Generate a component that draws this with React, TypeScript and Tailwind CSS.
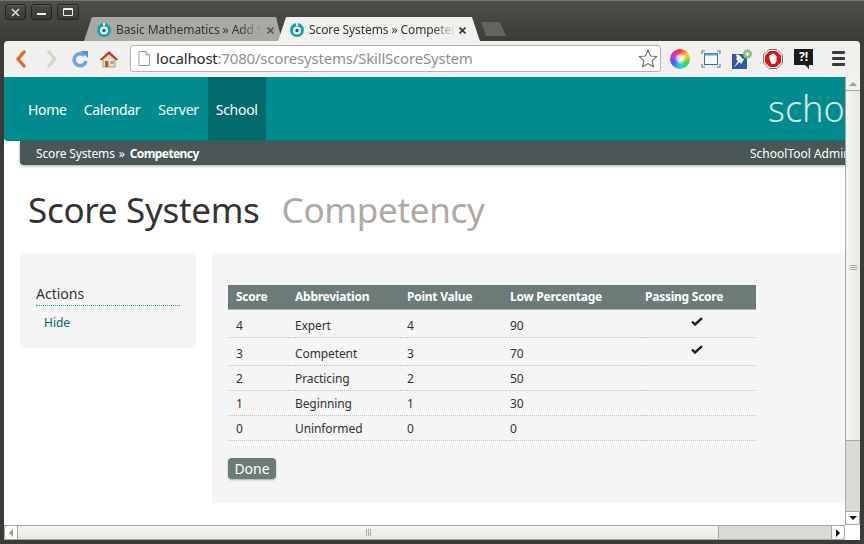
const rows = [
  { score: "4", abbr: "Expert", points: "4", low: "90", passing: true, h: "h-[28px]" },
  { score: "3", abbr: "Competent", points: "3", low: "70", passing: true, h: "h-[28px]" },
  { score: "2", abbr: "Practicing", points: "2", low: "50", passing: false, h: "h-[25px]" },
  { score: "1", abbr: "Beginning", points: "1", low: "30", passing: false, h: "h-[25px]" },
  { score: "0", abbr: "Uninformed", points: "0", low: "0", passing: false, h: "h-[25px]" },
];

function Favicon() {
  return (
    <svg width="14" height="14" viewBox="0 0 14 14" className="shrink-0">
      <circle cx="7" cy="7" r="7" fill="#12a5b0" />
      <circle cx="7" cy="7.5" r="4" fill="#e8eeee" />
      <circle cx="7" cy="7.5" r="1.7" fill="#4b5a5e" />
      <rect x="6" y="0" width="2" height="3" fill="#e8eeee" />
    </svg>
  );
}

function TabClose({ color }: { color: string }) {
  return (
    <svg width="7" height="7" viewBox="0 0 7 7" className="shrink-0">
      <path d="M.5 .5 L6.5 6.5 M6.5 .5 L.5 6.5" stroke={color} strokeWidth="1.6" />
    </svg>
  );
}

function WindowButton({ children, w }: { children: React.ReactNode; w: string }) {
  return (
    <div
      className={`${w} h-[16px] rounded-[3px] border border-[#24231f] bg-gradient-to-b from-[#4a4944] to-[#3a3935] flex items-center justify-center shadow-[inset_0_1px_0_#5c5b55]`}
    >
      {children}
    </div>
  );
}

function Toolbar() {
  return (
    <div className="h-[36px] mx-[4px] pb-[1px] bg-[#f1f0ee] rounded-t-[4px] flex items-center">
      {/* back */}
      <svg width="12" height="18" viewBox="0 0 12 18" className="ml-[11px]">
        <path d="M9 2 L3 9 L9 16" fill="none" stroke="#e2672a" strokeWidth="3.4" strokeLinejoin="round" strokeLinecap="round" />
      </svg>
      {/* forward */}
      <svg width="12" height="18" viewBox="0 0 12 18" className="ml-[19px]">
        <path d="M3 2 L9 9 L3 16" fill="none" stroke="#d6d4cf" strokeWidth="3.4" strokeLinejoin="round" strokeLinecap="round" />
      </svg>
      {/* reload */}
      <svg width="18" height="18" viewBox="0 0 18 18" className="ml-[13px]">
        <path d="M13.5 5.5 A6 6 0 1 0 15 11" fill="none" stroke="#6aa5da" strokeWidth="3.6" />
        <path d="M10 1 L17 1 L17 8 Z" fill="#4f8fcb" />
      </svg>
      {/* home */}
      <svg width="20" height="18" viewBox="0 0 20 18" className="ml-[10px]">
        <path d="M4 9 V17 H16 V9 L10 4 Z" fill="#e9dcc0" stroke="#a5875a" strokeWidth="0.8" />
        <path d="M0.8 9.5 L10 1 L19.2 9.5 L17.5 10.5 L10 4.2 L2.5 10.5 Z" fill="#c0392b" />
        <rect x="6" y="11" width="3.5" height="6" fill="#a86a32" />
        <rect x="11.5" y="11" width="3" height="3" fill="#8fa4b4" />
      </svg>
      {/* address bar */}
      <div className="ml-[11px] w-[531px] h-[27px] bg-white border border-[#b5b3ae] rounded-[3px] flex items-center pl-[7px] pr-[2px]">
        <svg width="12" height="15" viewBox="0 0 12 15" className="shrink-0">
          <path d="M1 .5 H8 L11.5 4 V14.5 H1 Z" fill="#fff" stroke="#9c9c9c" />
          <path d="M8 .5 V4 H11.5" fill="#e4e4e4" stroke="#9c9c9c" />
        </svg>
        <span className="ml-[6px] text-[15px] tracking-[-0.2px] whitespace-nowrap text-[#2c2c2c]">
          localhost<span className="text-[#8f8f8f]">:7080/scoresystems/SkillScoreSystem</span>
        </span>
        <svg width="20" height="19" viewBox="0 0 20 19" className="ml-auto">
          <path
            d="M10 1.2 L12.6 7 L18.8 7.6 L14.1 11.7 L15.5 17.8 L10 14.6 L4.5 17.8 L5.9 11.7 L1.2 7.6 L7.4 7 Z"
            fill="#fff"
            stroke="#77756f"
            strokeWidth="1.2"
            strokeLinejoin="round"
          />
        </svg>
      </div>
      {/* colour wheel */}
      <div className="ml-[9px] w-[20px] h-[20px] rounded-full bg-[conic-gradient(#f33,#fc3,#3d3,#3cd,#36e,#c3d,#f33)] flex items-center justify-center">
        <div className="w-[9px] h-[9px] rounded-full bg-white/80 blur-[1px]" />
      </div>
      {/* screen capture */}
      <svg width="20" height="18" viewBox="0 0 20 18" className="ml-[11px]">
        <path d="M1 4 V1 H4 M16 1 H19 V4 M19 14 V17 H16 M4 17 H1 V14" fill="none" stroke="#4a84b5" strokeWidth="1.2" />
        <rect x="3.5" y="3.5" width="13" height="11" fill="#f4f7fa" stroke="#3f6f99" />
        <rect x="3.5" y="3.5" width="13" height="2" fill="#6d9cc4" />
      </svg>
      {/* pin */}
      <svg width="22" height="20" viewBox="0 0 22 20" className="ml-[10px]">
        <rect x="1" y="5" width="15" height="15" fill="#3358a8" />
        <path d="M5 5.5 L8 6 L12 10 L13.5 9.5 L10 15 L8.5 13 L3 18.5 L7 12 L5 10 L6 8.5 Z" fill="#fff" />
        <circle cx="16.5" cy="5" r="4.5" fill="#8ec07c" />
        <path d="M16.5 3 V7 M14.5 5 H18.5" stroke="#fff" strokeWidth="1.2" />
      </svg>
      {/* stop */}
      <svg width="20" height="20" viewBox="0 0 20 20" className="ml-[10px]">
        <path d="M6 .5 H14 L19.5 6 V14 L14 19.5 H6 L.5 14 V6 Z" fill="#fff" stroke="#777" />
        <path d="M6.6 2 H13.4 L18 6.6 V13.4 L13.4 18 H6.6 L2 13.4 V6.6 Z" fill="#d9151c" />
        <path d="M6.5 10 V6 H8 V5 H9.5 V4.6 H11 V5.5 H12.5 V7 H13.5 V12 L12 15 H8.5 Z" fill="#fff" />
      </svg>
      {/* feedback */}
      <div className="ml-[11px] w-[19px] h-[20px] relative">
        <div className="w-[19px] h-[16px] bg-[#1c1c1c] flex items-center justify-center text-white text-[12px] font-bold leading-none">
          ?!
        </div>
        <div className="absolute left-[11px] top-[16px] border-l-[4px] border-l-transparent border-t-[4px] border-t-[#1c1c1c]" />
      </div>
      {/* menu */}
      <div className="ml-[19px] flex flex-col gap-[3px]">
        <div className="w-[13px] h-[3px] rounded-[1px] bg-[#3a3a3a]" />
        <div className="w-[13px] h-[3px] rounded-[1px] bg-[#3a3a3a]" />
        <div className="w-[13px] h-[3px] rounded-[1px] bg-[#3a3a3a]" />
      </div>
    </div>
  );
}

function Page() {
  return (
    <div className="w-[841px] h-full overflow-hidden bg-white text-[#333]">
      <div className="h-[64px] bg-[#008b8f] rounded-bl-[4px] flex text-white text-[14px] tracking-[-0.3px] border-b border-[#007a7e]">
        <div className="pl-[24px] pt-[2px] flex items-center">Home</div>
        <div className="pl-[17px] pt-[2px] flex items-center">Calendar</div>
        <div className="pl-[18px] pr-[9px] pt-[2px] flex items-center">Server</div>
        <div className="w-[58px] pt-[2px] bg-[#006a6c] flex items-center justify-center">School</div>
        <div className="ml-auto w-[77px] overflow-hidden flex items-center whitespace-nowrap text-[36px] tracking-normal text-[#d9e6e3] font-light">
          schooltool
        </div>
      </div>
      <div className="ml-[16px] h-[24px] pt-[1px] bg-[#4b5656] rounded-bl-[4px] shadow-[0_1px_3px_rgba(0,0,0,0.35)] flex items-center text-white text-[12px] tracking-[-0.15px] pl-[16px]">
        <span>Score Systems</span>
        <span className="ml-[4px]">»</span>
        <span className="ml-[5px] font-bold tracking-[-0.6px]">Competency</span>
        <span className="ml-auto w-[95px] overflow-hidden whitespace-nowrap tracking-normal">SchoolTool Administrator</span>
      </div>
      <h1 className="ml-[24px] mt-[22px] h-[46px] text-[35px] tracking-[-0.3px] leading-[46px] font-normal whitespace-nowrap">
        Score Systems<span className="ml-[22px] text-[#b0a9a3]">Competency</span>
      </h1>
      <div className="mt-[20px] ml-[16px] flex items-start gap-[16px]">
        <div className="w-[176px] h-[95px] bg-[#f5f5f5] px-[16px] pt-[31px]">
          <div className="text-[14px] leading-[20px] pb-[1px] border-b border-dotted border-[#12a0a4] text-[#333]">Actions</div>
          <div className="ml-[8px] mt-[8px] text-[12px] leading-[18px] text-[#00696d]">Hide</div>
        </div>
        <div className="flex-1 h-[250px] bg-[#f5f5f5] pt-[32px] pl-[16px]">
          <table className="w-[528px] table-fixed text-[12px] tracking-[-0.1px] border-collapse">
            <thead>
              <tr className="h-[24px] bg-[#6c7a78] text-white font-bold text-left border-b border-[#aeb3b0] tracking-[-0.25px]">
                <th className="w-[67px] pl-[8px] font-bold">Score</th>
                <th className="w-[112px] font-bold">Abbreviation</th>
                <th className="w-[103px] font-bold">Point Value</th>
                <th className="w-[135px] font-bold">Low Percentage</th>
                <th className="font-bold">Passing Score</th>
              </tr>
            </thead>
            <tbody>
              {rows.map((row) => (
                <tr key={row.score} className={`${row.h} border-b border-dotted border-[#bdbdbd]`}>
                  <td className={row.passing ? "pl-[8px] pt-[5px]" : "pl-[8px] pt-[2px]"}>{row.score}</td>
                  <td className={row.passing ? "pt-[5px]" : "pt-[2px]"}>{row.abbr}</td>
                  <td className={row.passing ? "pt-[5px]" : "pt-[2px]"}>{row.points}</td>
                  <td className={row.passing ? "pt-[5px]" : "pt-[2px]"}>{row.low}</td>
                  <td className="pl-[46px]">
                    {row.passing && (
                      <svg width="12" height="9" viewBox="0 0 12 9" className="-mt-[4px]">
                        <path d="M1 4.5 L4 7.5 L11 1.2" fill="none" stroke="#1d1d1d" strokeWidth="2.4" />
                      </svg>
                    )}
                  </td>
                </tr>
              ))}
            </tbody>
          </table>
          <button className="mt-[17px] w-[48px] h-[21px] rounded-[4px] bg-[#6c7a78] text-white text-[14px] leading-[21px] shadow-[0_1px_2px_rgba(0,0,0,0.3)]">
            Done
          </button>
        </div>
      </div>
    </div>
  );
}

function VerticalScrollbar() {
  return (
    <div className="w-[15px] h-full flex flex-col bg-[#dbdad8] border-l border-[#a9a7a3]">
      <div className="h-[14px] bg-[#f3f2f0] border-b border-[#a9a7a3] flex items-center justify-center">
        <div className="border-x-[4px] border-x-transparent border-b-[4px] border-b-[#9a9a9a]" />
      </div>
      <div className="h-[350px] bg-gradient-to-r from-[#f6f5f3] to-[#e9e8e5] border-b border-[#a9a7a3] flex items-start justify-center pt-[174px]">
        <div className="w-[7px] flex flex-col gap-[1px]">
          <div className="h-px bg-[#a9a7a3]" />
          <div className="h-px bg-[#a9a7a3]" />
          <div className="h-px bg-[#a9a7a3]" />
        </div>
      </div>
      <div className="flex-1" />
      <div className="h-[14px] bg-[#fbfbfa] border border-[#a9a7a3] -ml-px rounded-b-[3px] flex items-center justify-center">
        <div className="border-x-[4px] border-x-transparent border-t-[4px] border-t-[#111]" />
      </div>
    </div>
  );
}

function HorizontalScrollbar() {
  return (
    <div className="h-[15px] flex">
      <div className="w-[841px] flex border-t border-b border-[#a9a7a3] bg-[#dbdad8]">
        <div className="w-[14px] bg-[#fbfbfa] border-x border-[#a9a7a3] rounded-l-[3px] flex items-center justify-center">
          <div className="border-y-[4px] border-y-transparent border-r-[4px] border-r-[#9a9a9a]" />
        </div>
        <div className="w-[701px] bg-gradient-to-b from-[#f6f5f3] to-[#e9e8e5] border-r border-[#a9a7a3] flex items-center justify-center">
          <div className="h-[7px] flex gap-[1px]">
            <div className="w-px bg-[#a9a7a3]" />
            <div className="w-px bg-[#a9a7a3]" />
            <div className="w-px bg-[#a9a7a3]" />
          </div>
        </div>
        <div className="flex-1" />
        <div className="w-[14px] bg-[#fbfbfa] border-x border-[#a9a7a3] rounded-r-[3px] flex items-center justify-center">
          <div className="border-y-[4px] border-y-transparent border-l-[4px] border-l-[#111]" />
        </div>
      </div>
      <div className="flex-1 bg-white" />
    </div>
  );
}

export default function App() {
  return (
    <div className="w-[864px] h-[544px] overflow-hidden flex flex-col bg-[#3c3b37] font-['Noto_Sans',sans-serif] border-t border-[#77766f]">
      {/* title bar */}
      <div className="h-[40px] flex items-start bg-gradient-to-b from-[#4f4e49] to-[#3c3b37]">
        <div className="ml-[5px] mt-[3px] flex gap-[5px]">
          <WindowButton w="w-[21px]">
            <svg width="9" height="9" viewBox="0 0 9 9">
              <path d="M1 1 L8 8 M8 1 L1 8" stroke="#efefec" strokeWidth="1.4" />
            </svg>
          </WindowButton>
          <WindowButton w="w-[21px]">
            <div className="w-[9px] h-[2px] mt-[3px] bg-[#efefec]" />
          </WindowButton>
          <WindowButton w="w-[22px]">
            <div className="w-[10px] h-[8px] border border-[#efefec] border-t-2 rounded-[1px]" />
          </WindowButton>
        </div>
        <div className="ml-[5px] mt-[16px] flex items-start">
          <div className="w-[198px] h-[24px] pt-[2px] bg-[#a9a8a3] rounded-t-[4px] [clip-path:polygon(0_100%,4%_0,97%_0,100%_100%)] flex items-center pl-[13px] text-[12px] tracking-[-0.1px] text-[#35342f]">
            <Favicon />
            <span className="ml-[5px] w-[146px] overflow-hidden whitespace-nowrap [mask-image:linear-gradient(to_right,black_85%,transparent)]">
              Basic Mathematics » Add Section
            </span>
            <span className="ml-[5px] flex">
              <TabClose color="#5a5954" />
            </span>
          </div>
          <div className="-ml-[4px] w-[202px] h-[24px] pt-[2px] bg-[#f1f0ee] [clip-path:polygon(0_100%,4%_0,96%_0,100%_100%)] flex items-center pl-[12px] text-[12px] tracking-[-0.1px] text-[#35342f]">
            <Favicon />
            <span className="ml-[5px] w-[146px] overflow-hidden whitespace-nowrap [mask-image:linear-gradient(to_right,black_85%,transparent)]">
              Score Systems » Competency
            </span>
            <span className="ml-[4px] flex">
              <TabClose color="#35342f" />
            </span>
          </div>
          <div className="ml-[1px] mt-[5px] w-[25px] h-[14px] bg-[#64635e] [clip-path:polygon(0_0,75%_0,100%_100%,20%_100%)]" />
        </div>
      </div>
      <Toolbar />
      {/* browser viewport */}
      <div className="mx-[4px] h-[448px] flex">
        <Page />
        <VerticalScrollbar />
      </div>
      <div className="mx-[4px]">
        <HorizontalScrollbar />
      </div>
    </div>
  );
}
